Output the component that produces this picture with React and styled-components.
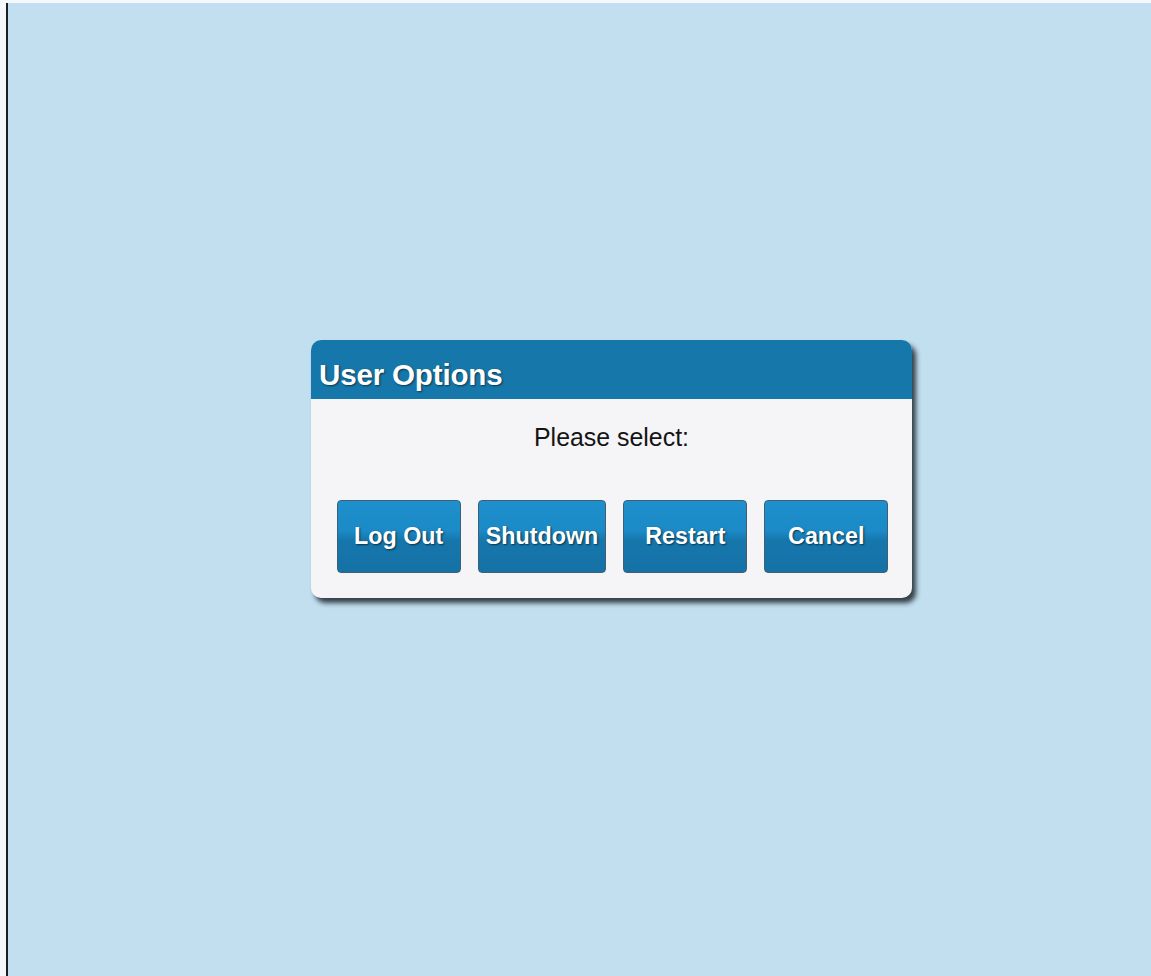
import React from 'react';
import styled, { createGlobalStyle } from 'styled-components';

const GlobalStyle = createGlobalStyle`
    html, body {
        margin: 0;
        padding: 0;
        background-color: #f4f8fb;
    }
    body {
        font-family: 'Liberation Sans', Arial, sans-serif;
    }
`;

const SCPage = styled.div`
    padding-top: 3px;
    padding-left: 6px;
    box-sizing: border-box;
`;

const SCDesktop = styled.div`
    min-height: 973px;
    background-color: #c1dfef;
    border-left: 2px solid #1b1e22;
    box-sizing: border-box;
    padding-top: 337px;
    padding-left: 303px;
`;

const SCDialog = styled.div`
    width: 601px;
    background-color: #f5f5f7;
    border-radius: 10px;
    overflow: hidden;
    box-shadow: 4px 5px 5px rgba(15, 22, 30, 0.8);
    display: flex;
    flex-direction: column;
`;

const SCHeader = styled.div`
    height: 59px;
    background-color: #1677aa;
    display: flex;
    align-items: center;
    padding-left: 8px;
    padding-top: 10px;
    box-sizing: border-box;
    h1 {
        margin: 0;
        font-size: 29.6px;
        font-weight: 700;
        color: #ffffff;
        text-shadow: 1px 1px 2px rgba(0, 0, 0, 0.55);
        letter-spacing: -0.2px;
    }
`;

const SCBody = styled.div`
    display: flex;
    flex-direction: column;
    align-items: center;
    padding-top: 24px;
    padding-bottom: 25px;
    p {
        margin: 0;
        font-size: 24.9px;
        color: #141414;
        line-height: 28px;
    }
`;

const SCButtonRow = styled.div`
    display: flex;
    gap: 17px;
    margin-top: 49px;
    margin-left: 2px;
`;

const SCButton = styled.button`
    min-width: 124px;
    height: 73px;
    padding: 0 7px;
    box-sizing: border-box;
    border: 1px solid #3d6077;
    border-radius: 4px;
    background: linear-gradient(to bottom, #1e90cd 0%, #1b8ac6 42%, #1677ad 55%, #1571a6 100%);
    color: #ffffff;
    font-family: 'Liberation Sans', Arial, sans-serif;
    font-size: 23.3px;
    font-weight: 700;
    text-shadow: 1px 1px 2px rgba(0, 0, 0, 0.6);
    cursor: pointer;
`;

const options = ['Log Out', 'Shutdown', 'Restart', 'Cancel'];

function App() {
    return (
        <>
            <GlobalStyle />
            <SCPage>
                <SCDesktop>
                    <SCDialog>
                        <SCHeader>
                            <h1>User Options</h1>
                        </SCHeader>
                        <SCBody>
                            <p>Please select:</p>
                            <SCButtonRow>
                                {options.map((label) => (
                                    <SCButton key={label}>{label}</SCButton>
                                ))}
                            </SCButtonRow>
                        </SCBody>
                    </SCDialog>
                </SCDesktop>
            </SCPage>
        </>
    );
}

export default App;
